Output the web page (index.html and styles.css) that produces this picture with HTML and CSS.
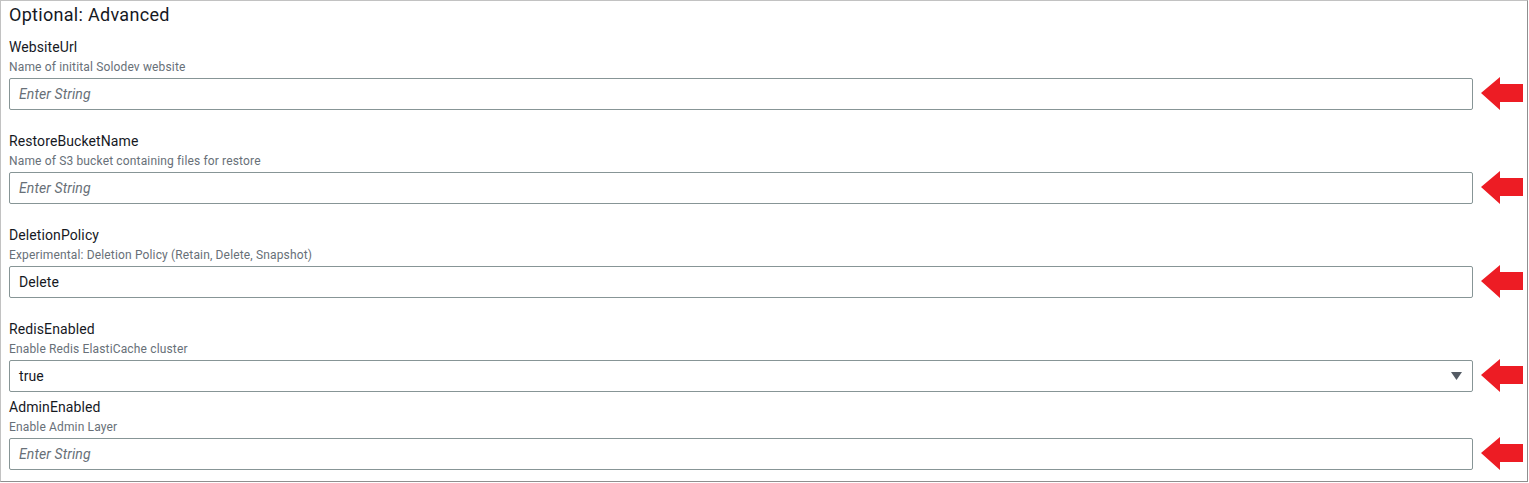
FILE: index.html
```html
<!DOCTYPE html>
<html lang="en">
<head>
<meta charset="utf-8">
<title>Optional: Advanced</title>
<link rel="stylesheet" href="styles.css">
</head>
<body>
<section class="panel">
  <h2 class="panel-title">Optional: Advanced</h2>

  <div class="field">
    <div class="field-label">WebsiteUrl</div>
    <div class="field-desc">Name of initital Solodev website</div>
    <div class="field-row">
      <div class="input placeholder">Enter String</div>
      <svg class="arrow" viewBox="0 0 42 33" width="42" height="33"><polygon points="0,16 19,0 19,7 42,7 42,25 19,25 19,33" /></svg>
    </div>
  </div>

  <div class="field">
    <div class="field-label">RestoreBucketName</div>
    <div class="field-desc">Name of S3 bucket containing files for restore</div>
    <div class="field-row">
      <div class="input placeholder">Enter String</div>
      <svg class="arrow" viewBox="0 0 42 33" width="42" height="33"><polygon points="0,16 19,0 19,7 42,7 42,25 19,25 19,33" /></svg>
    </div>
  </div>

  <div class="field">
    <div class="field-label">DeletionPolicy</div>
    <div class="field-desc">Experimental: Deletion Policy (Retain, Delete, Snapshot)</div>
    <div class="field-row">
      <div class="input">Delete</div>
      <svg class="arrow" viewBox="0 0 42 33" width="42" height="33"><polygon points="0,16 19,0 19,7 42,7 42,25 19,25 19,33" /></svg>
    </div>
  </div>

  <div class="field field-select">
    <div class="field-label">RedisEnabled</div>
    <div class="field-desc">Enable Redis ElastiCache cluster</div>
    <div class="field-row">
      <div class="input select"><span>true</span><svg class="caret" viewBox="0 0 11 8" width="11" height="8"><polygon points="0,0 11,0 5.5,8" /></svg></div>
      <svg class="arrow" viewBox="0 0 42 33" width="42" height="33"><polygon points="0,16 19,0 19,7 42,7 42,25 19,25 19,33" /></svg>
    </div>
  </div>

  <div class="field">
    <div class="field-label">AdminEnabled</div>
    <div class="field-desc">Enable Admin Layer</div>
    <div class="field-row">
      <div class="input placeholder">Enter String</div>
      <svg class="arrow" viewBox="0 0 42 33" width="42" height="33"><polygon points="0,16 19,0 19,7 42,7 42,25 19,25 19,33" /></svg>
    </div>
  </div>
</section>
</body>
</html>
```

FILE: styles.css
```css
html, body {
  margin: 0;
  padding: 0;
  background: #ffffff;
}

body {
  font-family: Roboto, "Liberation Sans", Arial, sans-serif;
  color: #16191f;
}

.panel {
  width: 1528px;
  height: 482px;
  box-sizing: border-box;
  border-top: 1px solid #c2c2c2;
  border-left: 1px solid #c2c2c2;
  border-right: 1px solid #8f8f8f;
  border-bottom: 1px solid #8f8f8f;
  padding: 0 4px 0 8px;
  background: #fff;
}

.panel-title {
  margin: 0;
  font-size: 18px;
  font-weight: 400;
  line-height: 28px;
  letter-spacing: 0.3px;
  color: #16191f;
}

.field {
  margin-top: 7px;
}

.field + .field {
  margin-top: 20px;
}

.field-select + .field {
  margin-top: 4px;
}

.field-label {
  font-size: 14px;
  line-height: 22px;
  letter-spacing: 0.1px;
  color: #16191f;
}

.field-desc {
  margin-top: 1px;
  font-size: 12px;
  line-height: 16px;
  letter-spacing: 0.15px;
  color: #687078;
}

.field-row {
  display: flex;
  align-items: center;
  gap: 8px;
  margin-top: 2px;
}

.input {
  flex: 1;
  height: 32px;
  box-sizing: border-box;
  border: 1px solid #879596;
  border-radius: 2px;
  padding: 0 9px;
  display: flex;
  align-items: center;
  font-size: 14px;
  letter-spacing: 0.1px;
  color: #16191f;
}

.placeholder {
  font-style: italic;
  color: #687078;
}

.select {
  justify-content: space-between;
  padding-right: 10px;
}

.caret polygon {
  fill: #545b64;
}

.arrow {
  flex: none;
  display: block;
}

.arrow polygon {
  fill: #ed1c24;
}
```
